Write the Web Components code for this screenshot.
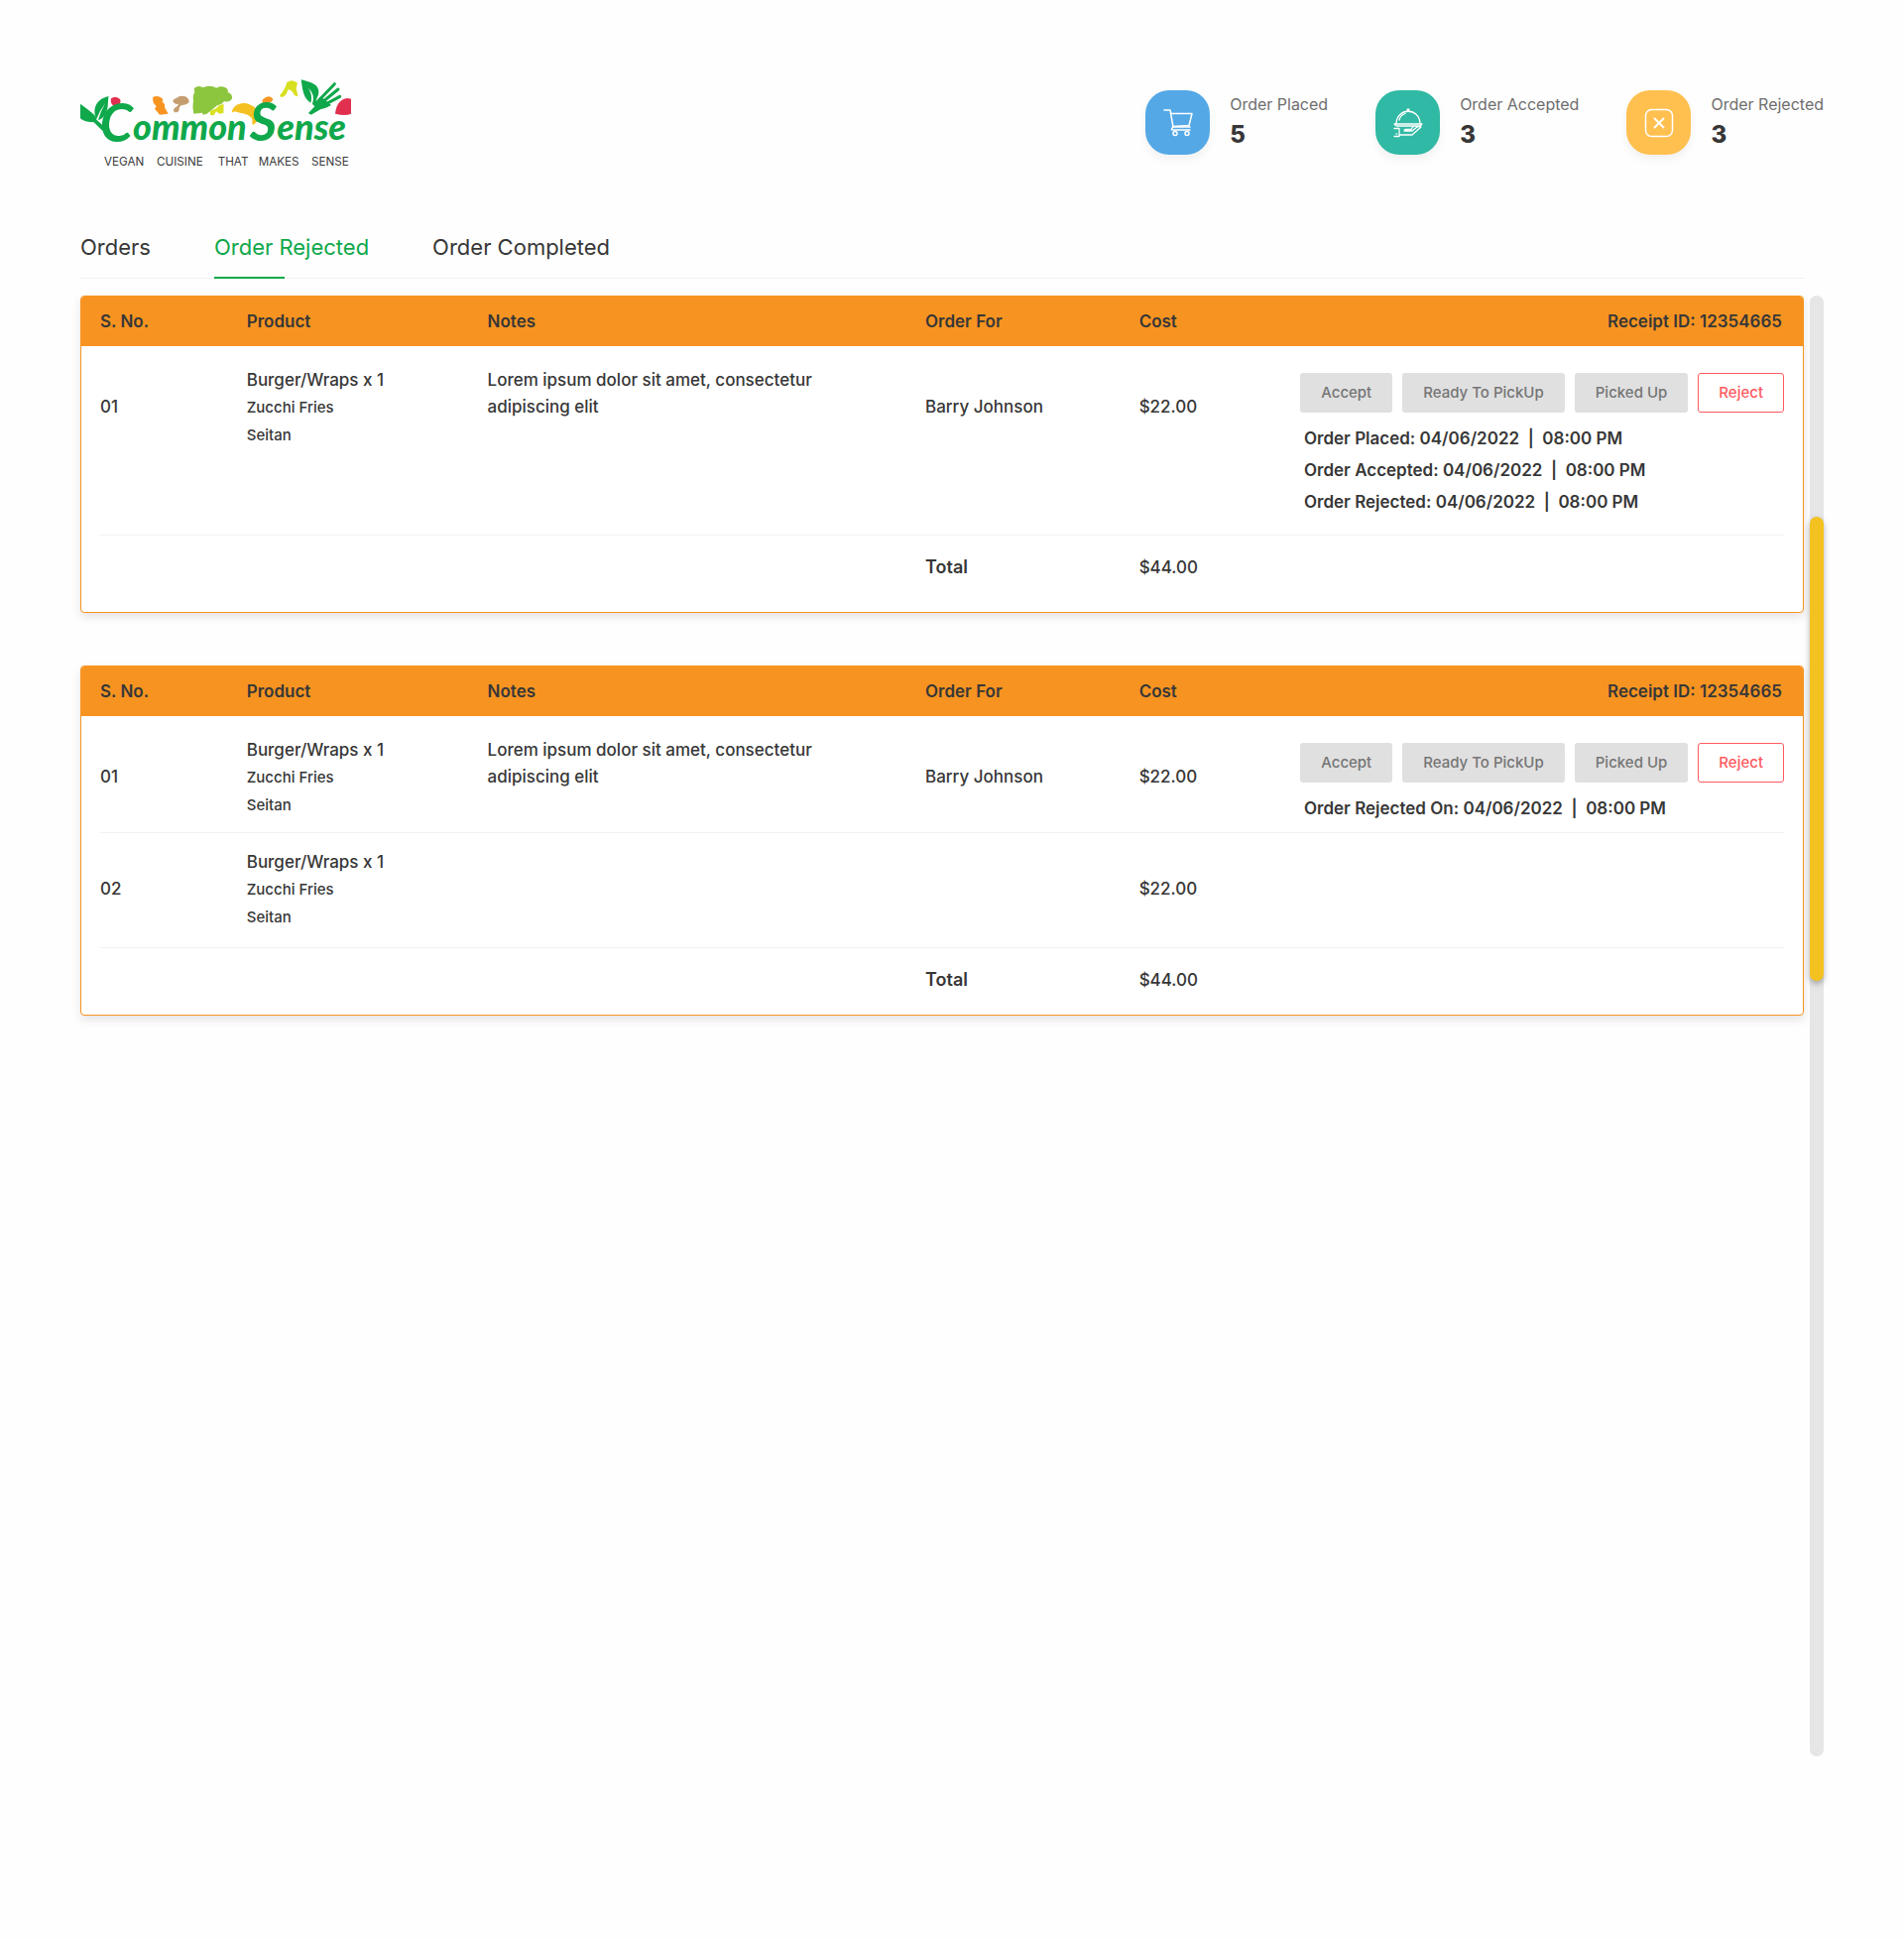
<!DOCTYPE html>
<html lang="en">
<head>
<meta charset="utf-8">
<title>Common Sense – Orders</title>
<style>
  body { margin: 0; background: #fefefe; color: #373737; font-family: Inter, "Liberation Sans", sans-serif; font-size: 16px; }
</style>
</head>
<body>
<orders-page></orders-page>

<template id="brand-logo">
  <style>
    :host { display: block; }
    svg { display: block; width: 273px; height: 92px; }
    .word { font: italic 900 108px Lato, "Liberation Sans", sans-serif; fill: #0fa84b; }
    .initial { font-size: 160px; font-weight: 700; }
    .tagline { font: 400 35px Inter, "Liberation Sans", sans-serif; fill: #3b3b3b; }
  </style>
  <svg viewBox="33 24 819 276" role="img" aria-label="Common Sense, vegan cuisine that makes sense">
    <g fill="#0fa84b">
      <path d="M33 104 Q55 120 68 131 Q82 142 82 152 Q92 160 102 171 L101 187 Q86 172 74 160 Q45 160 33 148Z"/>
      <path d="M82 150 C66 118 86 86 119 82 C114 98 121 118 107 137 C101 147 94 151 87 153 Q94 128 108 103 Q91 126 82 150Z"/>
      <path d="M701 31 C726 38 748 42 753 61 C757 76 748 86 746 96 L760 82 L792 108 Q775 119 761 120 L731 137 L723 132 L742 112 L735 105 Q745 76 723 56 Q737 78 730 101 C708 88 705 61 701 31Z"/>
      <path d="M758 90 L802 44 M769 96 L813 60 M779 103 L818 82" fill="none" stroke="#0fa84b" stroke-width="9" stroke-linecap="round"/>
    </g>
    <g fill="#e1304f">
      <path d="M126 88 Q140 77 154 91 Q158 109 137 112 Q122 105 126 88Z"/>
      <path d="M804 134 Q808 92 841 87 L852 89 L852 134 Q835 142 804 134Z"/>
    </g>
    <g fill="#f79421">
      <path d="M253 83 Q271 76 283 90 L281 99 Q291 103 288 115 L299 134 L273 137 L258 119 L263 111 Q249 100 253 83Z"/>
      <path d="M585 91 Q604 73 616 89 Q613 101 601 99 Q598 116 590 112 Q581 103 585 91Z"/>
    </g>
    <path fill="#c59e70" d="M313 97 Q314 89 324 87 Q332 78 347 81 Q362 85 362 99 Q355 107 347 107 Q332 107 332 120 Q332 131 318 130 Q312 122 318 117 Q328 112 330 104 Q318 107 313 97Z"/>
    <path fill="#8cc63f" d="M377 58 Q389 46 403 55 Q425 45 445 56 Q458 48 472 55 Q482 60 479 69 Q494 74 492 88 Q484 102 468 96 Q462 107 448 108 L416 134 L404 137 L402 131 L376 134 Q371 116 375 94 Q372 78 379 70Z"/>
    <path fill="#d9e021" d="M425 126 L444 118 L453 108 L467 105 L466 132 L454 134 L444 127 L437 139 L426 138Z"/>
    <path fill="#f5c122" d="M491 131 C493 108 522 94 548 107 C578 121 580 153 556 168 C549 164 558 154 549 145 C538 133 520 134 511 130 Q499 125 491 131Z"/>
    <path fill="#d9e021" d="M636 79 Q652 62 658 39 Q674 27 690 41 L686 58 L692 82 L681 79 Q674 61 661 61 Q656 84 641 84Z"/>
    <text class="word" y="213"><tspan class="initial" x="92" y="220">C</tspan><tspan x="192" y="213">ommon</tspan> <tspan class="initial" x="545" y="216">S</tspan><tspan x="628" y="213">ense</tspan></text>
    <text class="tagline" y="291"><tspan x="105">VEGAN</tspan> <tspan x="264">CUISINE</tspan> <tspan x="449">THAT</tspan> <tspan x="572">MAKES</tspan> <tspan x="732">SENSE</tspan></text>
  </svg>
</template>

<template id="stat-tile">
  <style>
    :host { display: flex; align-items: center; gap: 20px; }
    .icon { width: 65px; height: 65px; border-radius: 24px; background: var(--tile); box-shadow: 0 5px 8px rgba(0,0,0,.05); display: grid; place-items: center; }
    .label { font-size: 16px; line-height: 24px; color: #6e6e6e; white-space: nowrap; }
    .value { font-size: 24px; line-height: 38px; font-weight: 800; }
  </style>
  <div class="icon"><slot name="icon"></slot></div>
  <div>
    <div class="label"><slot name="label"></slot></div>
    <div class="value"><slot name="value"></slot></div>
  </div>
</template>

<template id="order-tabs">
  <style>
    :host { display: block; }
    nav { display: flex; gap: 64px; border-bottom: 1px solid #f1f1f1; }
    a { display: block; position: relative; color: #373737; font-size: 22px; line-height: 30px; font-weight: 400; text-decoration: none; padding-bottom: 16px; white-space: nowrap; }
    a[aria-current] { color: #0fa84b; }
    a[aria-current]::after { content: ""; position: absolute; left: 0; bottom: -1px; width: 71px; height: 2px; background: #0fa84b; }
  </style>
  <nav aria-label="Order lists">
    <a href="#orders">Orders</a>
    <a href="#rejected" aria-current="page">Order Rejected</a>
    <a href="#completed">Order Completed</a>
  </nav>
</template>

<template id="action-button">
  <style>
    :host { display: block; }
    button { display: block; height: 40px; padding: 0 21px; border: 0; border-radius: 3px; background: #e0e0e0; color: #757575; font: 500 15px/38px Inter, "Liberation Sans", sans-serif; white-space: nowrap; }
    :host([danger]) button { padding: 0 20px; border: 1px solid #ff5a5f; background: #fff; color: #ff5a5f; }
  </style>
  <button type="button"><slot></slot></button>
</template>

<template id="order-card">
  <style>
    :host { display: block; border: 1px solid #f79421; border-radius: 4px; background: #fff; box-shadow: 0 4px 10px rgba(0,0,0,.11); }
    .clip { overflow: hidden; padding: 0 19px; border-radius: 3px; }
    table { width: 100%; border-collapse: collapse; table-layout: fixed; font-size: 17px; line-height: 28px; font-weight: 450; }
    .no { width: 8.7%; } .product { width: 14.3%; } .notes { width: 26%; } .for { width: 12.7%; } .cost { width: 9%; }
    th { height: 50px; padding: 0; background: #f79421; text-align: left; font-size: 17px; font-weight: 600; }
    th:first-child { box-shadow: -19px 0 #f79421; }
    th:last-child { box-shadow: 19px 0 #f79421; text-align: right; padding-right: 2px; }
    td { vertical-align: top; padding: 47px 0 0; }
    tbody tr { border-bottom: 1px solid #f1f1f1; }
    tbody tr + tr td { padding-top: 42px; }
    tbody td.items { padding-top: 20px; padding-bottom: 13px; }
    tbody tr + tr td.items { padding-top: 15px; padding-bottom: 16px; }
    .items div + div { font-size: 15px; }
    tbody td.note { padding-top: 21px; line-height: 27px; }
    .note p { margin: 0; max-width: 360px; }
    tbody td.actions { padding-top: 27px; padding-bottom: 8px; }
    :host([history]) tbody td.actions { padding-bottom: 17px; }
    .buttons { display: flex; justify-content: flex-end; gap: 10px; padding-bottom: 10px; }
    .times { width: 484px; margin-left: auto; font-size: 17px; font-weight: 600; line-height: 32px; white-space: pre; }
    tfoot td { padding: 18px 0 21px; }
    :host([history]) tfoot td { padding-bottom: 31px; }
    tfoot .total { font-size: 18px; font-weight: 600; }
  </style>
  <div class="clip">
    <table>
      <colgroup><col class="no"><col class="product"><col class="notes"><col class="for"><col class="cost"><col></colgroup>
      <thead><tr><th>S. No.</th><th>Product</th><th>Notes</th><th>Order For</th><th>Cost</th><th class="receipt"></th></tr></thead>
      <tbody></tbody>
      <tfoot><tr><td></td><td></td><td></td><td class="total">Total</td><td class="sum"></td><td></td></tr></tfoot>
    </table>
  </div>
</template>

<template id="scroll-rail">
  <style>
    :host { display: flex; flex-direction: column; width: 14px; border-radius: 7px; background: #e6e6e6; }
    .before { flex: 223; }
    .thumb { flex: 468; border-radius: 7px; background: #f4c220; box-shadow: 0 3px 6px rgba(0,0,0,.3); }
    .after { flex: 782; }
  </style>
  <div class="before"></div><div class="thumb"></div><div class="after"></div>
</template>

<template id="orders-page">
  <style>
    :host { display: flex; flex-direction: column; box-sizing: border-box; min-height: 100vh; padding: 78px 81px 185px; }
    header { display: flex; justify-content: space-between; align-items: flex-start; height: 156px; }
    .stats { display: flex; gap: 48px; padding-top: 13px; }
    .tabs { padding-right: 20px; }
    main { flex: 1; display: flex; gap: 6px; padding-top: 17px; }
    .cards { flex: 1; display: flex; flex-direction: column; gap: 53px; }
    svg { display: block; width: 32px; height: 32px; fill: none; stroke: #fff; stroke-width: 1.5; stroke-linecap: round; stroke-linejoin: round; }
  </style>
  <header>
    <brand-logo></brand-logo>
    <div class="stats">
      <stat-tile style="--tile:#54a8e6">
        <svg slot="icon" viewBox="0 0 32 32"><path d="M2 3h6l3 17h17"/><path d="M8.500 6.500H30L27 18.500 10.500 19.500M11 20q-3 3 0 3h17"/><circle cx="13" cy="26.500" r="2"/><circle cx="25" cy="26.500" r="2"/></svg>
        <span slot="label">Order Placed</span><span slot="value">5</span>
      </stat-tile>
      <stat-tile style="--tile:#30b9a4">
        <svg slot="icon" viewBox="0 0 32 32" style="stroke-width:1.300"><circle cx="16" cy="3" r="1"/><path d="M4 17C4 0 28 0 28 17M2 17h28q-1 2-3 2H5q-2 0-3-2M7 13q1-5 6-6.500M2 21.500h5v8H2M4 27h.5M7 28h13l9-8q-2-1-4 0l-5 4h-7M12 24q0-1.500 2-1.500h5q1-2 2-2.500"/></svg>
        <span slot="label">Order Accepted</span><span slot="value">3</span>
      </stat-tile>
      <stat-tile style="--tile:#ffc050">
        <svg slot="icon" viewBox="0 0 32 32"><rect x="2.500" y="2.500" width="27" height="27" rx="6"/><path d="M11.500 11.500l9 9M20.500 11.500l-9 9" stroke-width="1.900"/></svg>
        <span slot="label">Order Rejected</span><span slot="value">3</span>
      </stat-tile>
    </div>
  </header>
  <order-tabs class="tabs"></order-tabs>
  <main>
    <div class="cards">
      <order-card history receipt="12354665" total="$44.00"></order-card>
      <order-card receipt="12354665" total="$44.00"></order-card>
    </div>
    <scroll-rail></scroll-rail>
  </main>
</template>

<script>
  class TemplateElement extends HTMLElement {
    constructor() {
      super();
      const template = document.getElementById(this.localName);
      this.attachShadow({ mode: "open" }).append(template.content.cloneNode(true));
    }
  }

  const stamp = "04/06/2022  |  08:00 PM";
  const items = ["Burger/Wraps x 1", "Zucchi Fries", "Seitan"];
  const first = { no: "01", items, note: "Lorem ipsum dolor sit amet, consectetur adipiscing elit", customer: "Barry Johnson", cost: "$22.00" };
  const orders = [
    [{ ...first, times: ["Order Placed: " + stamp, "Order Accepted: " + stamp, "Order Rejected: " + stamp] }],
    [{ ...first, times: ["Order Rejected On: " + stamp] }, { no: "02", items, note: "", customer: "", cost: "$22.00" }]
  ];

  class OrderCard extends TemplateElement {
    connectedCallback() {
      this.shadowRoot.querySelector(".receipt").textContent = "Receipt ID: " + this.getAttribute("receipt");
      this.shadowRoot.querySelector(".sum").textContent = this.getAttribute("total");
    }
    set rows(rows) {
      const lines = list => list.map(text => `<div>${text}</div>`).join("");
      this.shadowRoot.querySelector("tbody").innerHTML = rows.map(row => `
        <tr>
          <td>${row.no}</td>
          <td class="items">${lines(row.items)}</td>
          <td class="note"><p>${row.note}</p></td>
          <td>${row.customer}</td>
          <td>${row.cost}</td>
          <td class="actions">${row.times ? `
            <div class="buttons">
              <action-button>Accept</action-button><action-button>Ready To PickUp</action-button><action-button>Picked Up</action-button><action-button danger>Reject</action-button>
            </div>
            <div class="times">${lines(row.times)}</div>` : ""}</td>
        </tr>`).join("");
    }
  }

  class OrdersPage extends TemplateElement {
    connectedCallback() {
      this.shadowRoot.querySelectorAll("order-card").forEach((card, i) => { card.rows = orders[i]; });
    }
  }

  for (const name of ["brand-logo", "stat-tile", "order-tabs", "action-button", "scroll-rail"]) {
    customElements.define(name, class extends TemplateElement {});
  }
  customElements.define("order-card", OrderCard);
  customElements.define("orders-page", OrdersPage);
</script>
</body>
</html>
